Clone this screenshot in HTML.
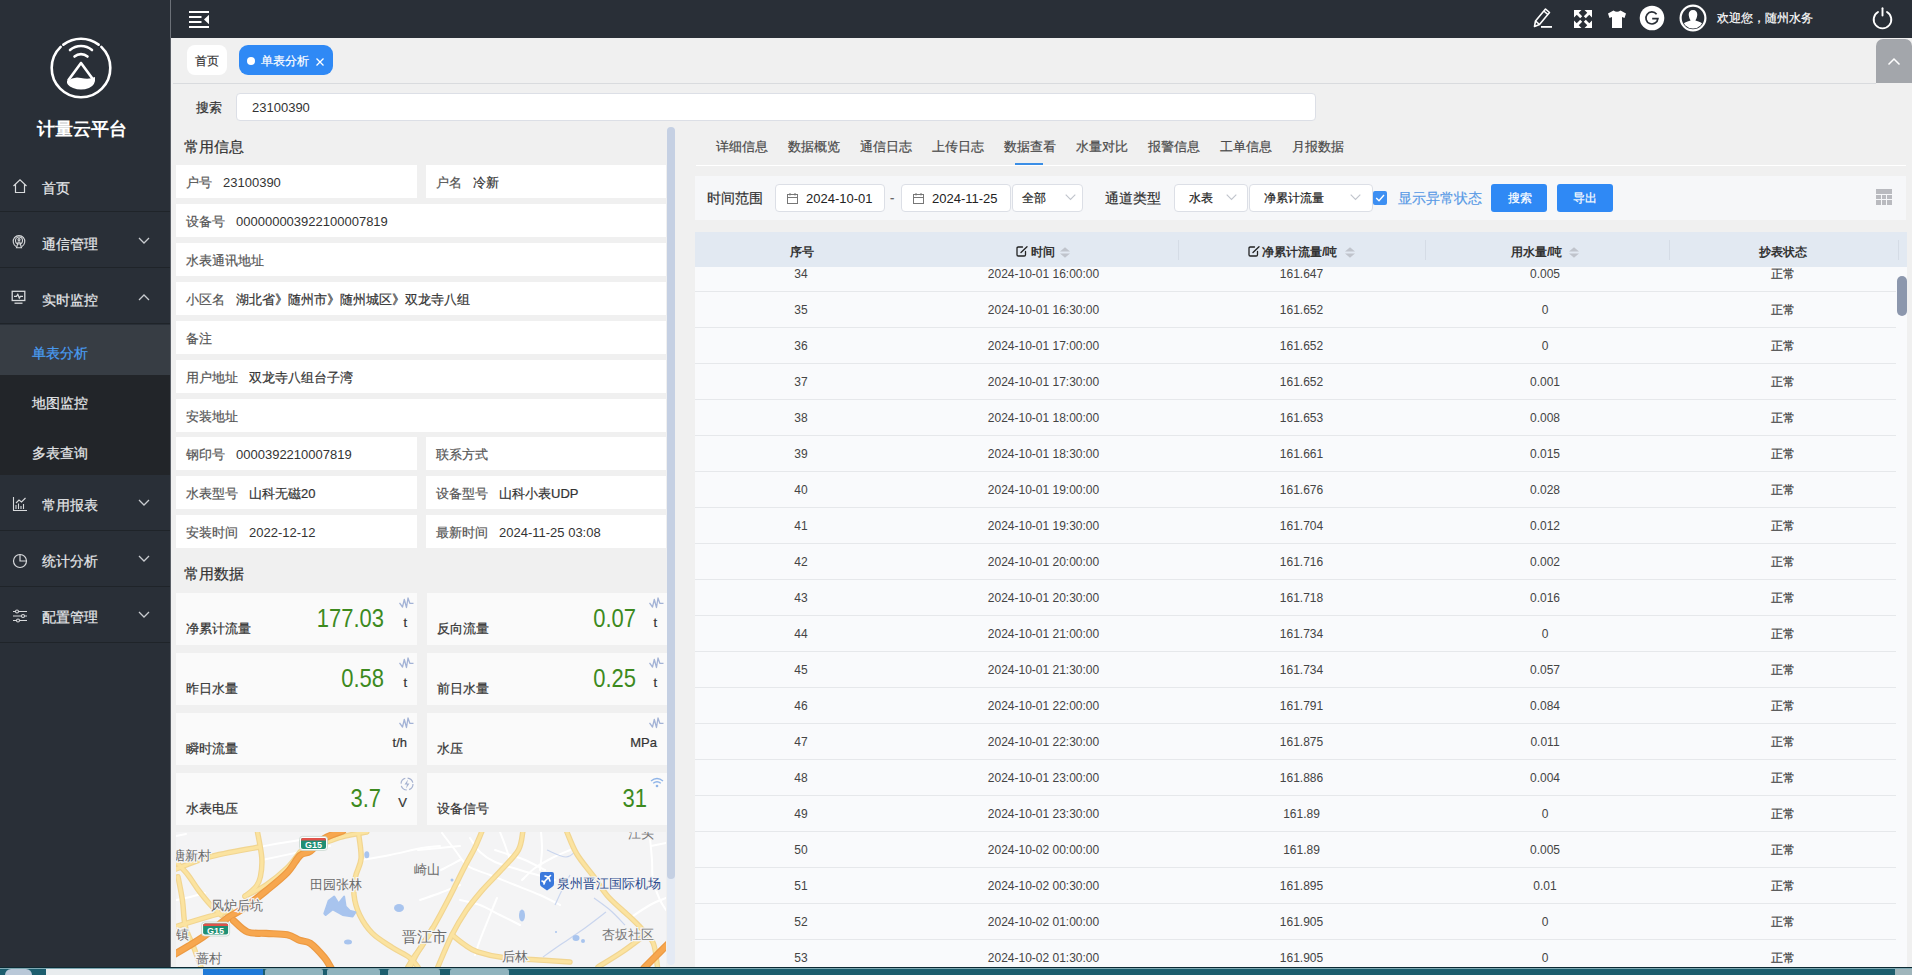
<!DOCTYPE html>
<html><head><meta charset="utf-8"><title>单表分析</title>
<style>
*{box-sizing:border-box;margin:0;padding:0}
html,body{width:1912px;height:975px;overflow:hidden}
body{-webkit-text-stroke:0.2px currentColor;position:relative;background:#f0f0f0;font-family:"Liberation Sans",sans-serif;color:#333;font-size:13px}
.a{position:absolute;white-space:nowrap}
svg{display:block}
.sb{position:absolute;left:0;top:0;width:170px;height:975px;background:#292f37}
.mi{position:absolute;left:0;width:170px;height:56px;border-bottom:1px solid #1f2429}
.mt{position:absolute;left:42px;font-size:14px;line-height:14px;color:#e6e8ea}
.mic{position:absolute;left:12px}
.chev{position:absolute;left:138px}
.smi{position:absolute;left:0;width:170px;height:50px;background:#222529}
.smt{position:absolute;left:32px;font-size:14px;line-height:14px;color:#e6e8ea}
.hdr{position:absolute;left:171px;top:0;width:1741px;height:38px;background:#292f37}
.cell{position:absolute;height:33px;background:#fff}
.cl{position:absolute;left:10px;top:11px;font-size:13px;line-height:13px;color:#555}
.cv{position:absolute;top:11px;font-size:13px;line-height:13px;color:#333}
.card{position:absolute;width:241px;height:52px;background:#fafafa}
.cdl{position:absolute;left:10px;top:29px;font-size:13px;line-height:13px;color:#333}
.cdv{-webkit-text-stroke:0;position:absolute;font-size:22px;line-height:22px;color:#3d8a1e;top:17px;transform:scaleY(1.13);transform-origin:50% 100%}
.cdu{position:absolute;font-size:13px;line-height:13px;color:#333;top:23px}
.tab{position:absolute;top:140px;font-size:13px;line-height:13px;color:#4a4a4a}
.ns{-webkit-text-stroke:0}
.inp{position:absolute;background:#fff;border:1px solid #dcdfe6;border-radius:4px}
.th{position:absolute;top:246px;font-size:12px;line-height:12px;font-weight:bold;color:#333;-webkit-text-stroke:0}
.td{position:absolute;font-size:12px;line-height:12px;color:#444;text-align:center;-webkit-text-stroke:0}
.zc{-webkit-text-stroke:0.2px currentColor}
.rl{position:absolute;left:695px;width:1201px;height:1px;background:#e6e8eb}
</style></head><body>

<div class="sb"></div>
<div class="a" style="left:170px;top:0;width:1px;height:38px;background:#6c7178"></div>
<div class="a" style="left:170px;top:38px;width:1px;height:930px;background:#5a5f66"></div>
<svg class="a" style="left:46px;top:33px" width="70" height="70" viewBox="0 0 70 70">
<g fill="none" stroke="#fff" stroke-width="2.6" stroke-linecap="round">
<path d="M 14.65 13.92 A 29.3 29.3 0 1 0 55.35 13.92"/>
<path d="M 17.37 11.6 A 29.3 29.3 0 0 1 52.63 11.6"/>
<path d="M 24 17 A 17 17 0 0 1 46 17"/>
<path d="M 28.5 23.5 A 10 10 0 0 1 41.5 23.5"/>
<path d="M 35 30 L 22.5 47 M 35 30 L 47.5 47"/>
</g>
<path d="M 21 48 Q 28 43 35 45 Q 43 47 49 44 Q 50 52 43 55 Q 35 58 27 55 Q 20 52 21 48 Z" fill="#fff"/>
</svg>
<div class="a" style="left:37px;top:120px;font-size:18px;line-height:18px;font-weight:bold;color:#fff;-webkit-text-stroke:0">计量云平台</div>
<div class="mi" style="top:156px">
<div class="mic" style="top:22px;left:12px"><svg width="16" height="16" viewBox="0 0 16 16"><path d="M1.5 8 L8 1.8 L14.5 8 M3.5 6.3 V14.5 H12.5 V6.3" fill="none" stroke="#d8dadc" stroke-width="1.2"/></svg></div>
<div class="mt" style="top:25px">首页</div>
</div>
<div class="mi" style="top:212px">
<div class="mic" style="top:22px;left:11px"><svg width="16" height="16" viewBox="0 0 16 16"><g fill="none" stroke="#d8dadc" stroke-width="1.1"><path d="M5.2 12.5 A5.8 5.8 0 1 1 10.8 12.5"/><circle cx="8" cy="6.5" r="3.5"/><circle cx="8" cy="5.5" r="1"/><path d="M5.5 13.8 H10.5 L8.8 8 H7.2 Z"/></g></svg></div>
<div class="mt" style="top:25px">通信管理</div>
<div class="chev" style="top:25px"><svg width="12" height="7" viewBox="0 0 12 7"><path d="M1 1 L6 6 L11 1" fill="none" stroke="#c9ccd0" stroke-width="1.3"/></svg></div>
</div>
<div class="mi" style="top:268px">
<div class="mic" style="top:22px;left:11px"><svg width="16" height="16" viewBox="0 0 16 16"><g fill="none" stroke="#d8dadc" stroke-width="1.3"><rect x="1.2" y="1.3" width="12.6" height="9.2"/><path d="M3 6.3 H5.5 L6.8 4.3 L8.3 8 L9.4 6.3 H12"/><path d="M3.5 13.2 H11.5"/></g></svg></div>
<div class="mt" style="top:25px">实时监控</div>
<div class="chev" style="top:26px"><svg width="12" height="7" viewBox="0 0 12 7"><path d="M1 6 L6 1 L11 6" fill="none" stroke="#c9ccd0" stroke-width="1.3"/></svg></div>
</div>
<div class="smi" style="top:325px;background:#373d44"><div class="smt" style="top:21px;color:#4a9ff5">单表分析</div></div>
<div class="smi" style="top:375px"><div class="smt" style="top:21px">地图监控</div></div>
<div class="smi" style="top:425px"><div class="smt" style="top:21px">多表查询</div></div>
<div class="mi" style="top:475px">
<div class="mic" style="top:21px"><svg width="16" height="16" viewBox="0 0 16 16"><g fill="none" stroke="#d8dadc" stroke-width="1.1"><path d="M1.5 1 V14.5 H15"/><path d="M4 13 V9 M6.5 13 V7.5 M9 13 V10 M11.5 13 V8 M4 7 L7 4 L9.5 6 L13.5 2"/></g></svg></div>
<div class="mt" style="top:23px">常用报表</div>
<div class="chev" style="top:24px"><svg width="12" height="7" viewBox="0 0 12 7"><path d="M1 1 L6 6 L11 1" fill="none" stroke="#c9ccd0" stroke-width="1.3"/></svg></div>
</div>
<div class="mi" style="top:531px">
<div class="mic" style="top:22px"><svg width="16" height="16" viewBox="0 0 16 16"><g fill="none" stroke="#d8dadc" stroke-width="1.2"><circle cx="8" cy="8" r="6.5"/><path d="M8 1.5 V8 H14.5"/></g></svg></div>
<div class="mt" style="top:23px">统计分析</div>
<div class="chev" style="top:24px"><svg width="12" height="7" viewBox="0 0 12 7"><path d="M1 1 L6 6 L11 1" fill="none" stroke="#c9ccd0" stroke-width="1.3"/></svg></div>
</div>
<div class="mi" style="top:587px">
<div class="mic" style="top:21px"><svg width="16" height="16" viewBox="0 0 16 16"><g fill="none" stroke="#d8dadc" stroke-width="1.1"><path d="M1 3.5 H15 M1 8 H15 M1 12.5 H15"/><circle cx="5" cy="3.5" r="1.5" fill="#292f37"/><circle cx="11" cy="8" r="1.5" fill="#292f37"/><circle cx="6" cy="12.5" r="1.5" fill="#292f37"/></g></svg></div>
<div class="mt" style="top:23px">配置管理</div>
<div class="chev" style="top:24px"><svg width="12" height="7" viewBox="0 0 12 7"><path d="M1 1 L6 6 L11 1" fill="none" stroke="#c9ccd0" stroke-width="1.3"/></svg></div>
</div>
<div class="hdr"></div>
<svg class="a" style="left:189px;top:11px" width="20" height="17" viewBox="0 0 20 17">
<g fill="#fff"><rect x="0" y="0" width="20" height="2"/><rect x="0" y="5" width="12.5" height="2"/><rect x="0" y="10" width="12.5" height="2"/><rect x="0" y="15" width="20" height="2"/><path d="M20 3.8 L15 8.5 L20 13.2 Z"/></g></svg>
<svg class="a" style="left:1532px;top:7px" width="22" height="22" viewBox="0 0 22 22">
<g fill="none" stroke="#fff" stroke-width="1.6" stroke-linejoin="round"><path d="M2.5 19.5 L3.5 14 L13.5 2 L17.5 5.5 L7.5 17.5 Z"/><path d="M11.8 4 L15.8 7.5"/><path d="M3.5 14 L7.5 17.5"/></g>
<rect x="9" y="19" width="11" height="1.8" fill="#fff"/></svg>
<svg class="a" style="left:1574px;top:10px" width="18" height="18" viewBox="0 0 18 18">
<path d="M0 0 H7.5 L0 7.5 Z M18 0 V7.5 L10.5 0 Z M0 18 V10.5 L7.5 18 Z M18 18 H10.5 L18 10.5 Z" fill="#fff"/>
<path d="M2 2 L7.2 7.2 M16 2 L10.8 7.2 M2 16 L7.2 10.8 M16 16 L10.8 10.8" stroke="#fff" stroke-width="2.8"/></svg>
<svg class="a" style="left:1607px;top:9px" width="20" height="20" viewBox="0 0 20 20">
<path d="M6.5 1.5 Q10 4 13.5 1.5 L19 4.5 L17.5 9 L15 8 V19 H5 V8 L2.5 9 L1 4.5 Z" fill="#fff"/></svg>
<svg class="a" style="left:1639px;top:5px" width="26" height="26" viewBox="0 0 26 26">
<circle cx="13" cy="13" r="12.3" fill="#fff"/>
<path d="M17.6 9.2 A6 6 0 1 0 18.9 13.6 H13.2" fill="none" stroke="#292f37" stroke-width="1.7"/></svg>
<svg class="a" style="left:1679px;top:4px" width="28" height="28" viewBox="0 0 28 28">
<defs><clipPath id="uc"><circle cx="14" cy="14" r="10.6"/></clipPath></defs>
<circle cx="14" cy="14" r="12.4" fill="none" stroke="#fff" stroke-width="2.2"/>
<g clip-path="url(#uc)" fill="#fff"><path d="M14 6 C17.4 6 18.6 8.8 18.2 11.6 C17.9 13.9 17.1 15.4 16.4 16.4 C20.8 17.4 24 19 25 22 L25 28 H3 V22 C4 19 7.2 17.4 11.6 16.4 C10.9 15.4 10.1 13.9 9.8 11.6 C9.4 8.8 10.6 6 14 6 Z"/></g></svg>
<div class="a" style="left:1717px;top:12px;font-size:12px;line-height:12px;color:#fff">欢迎您，随州水务</div>
<svg class="a" style="left:1871px;top:7px" width="23" height="23" viewBox="0 0 23 23">
<g fill="none" stroke="#fff" stroke-width="1.9" stroke-linecap="round"><path d="M7 5 A8.8 8.8 0 1 0 16 5"/><path d="M11.5 1.2 V8.5"/></g></svg>
<div class="a" style="left:173px;top:83px;width:1703px;height:1px;background:#d9dbde"></div>
<div class="a" style="left:187px;top:45px;width:40px;height:30px;background:#fff;border-radius:8px"></div>
<div class="a" style="left:195px;top:55px;font-size:12px;line-height:12px;color:#333">首页</div>
<div class="a" style="left:239px;top:45px;width:94px;height:30px;background:#2f89f5;border-radius:9px"></div>
<div class="a" style="left:247px;top:57px;width:8px;height:8px;border-radius:50%;background:#fff"></div>
<div class="a" style="left:261px;top:55px;font-size:12px;line-height:12px;color:#fff">单表分析</div>
<svg class="a" style="left:315px;top:57px" width="10" height="10" viewBox="0 0 10 10"><path d="M1.5 1.5 L8.5 8.5 M8.5 1.5 L1.5 8.5" stroke="#fff" stroke-width="1.3"/></svg>
<div class="a" style="left:1876px;top:39px;width:36px;height:44px;background:#a3a6ab;border-radius:7px 7px 0 0"></div>
<svg class="a" style="left:1887px;top:57px" width="14" height="9" viewBox="0 0 14 9"><path d="M1.5 7.5 L7 2 L12.5 7.5" fill="none" stroke="#fff" stroke-width="1.5"/></svg>
<div class="a" style="left:196px;top:101px;font-size:13px;line-height:13px;color:#333">搜索</div>
<div class="inp" style="left:236px;top:93px;width:1080px;height:28px"></div>
<div class="a ns" style="left:252px;top:101px;font-size:13px;line-height:13px;color:#333">23100390</div>
<div class="a" style="left:184px;top:139px;font-size:15px;line-height:15px;color:#333">常用信息</div>
<div class="cell" style="left:176px;top:165px;width:241px"><span class="cl">户号</span>
<span class="cv ns" style="left:47px">23100390</span>
</div>
<div class="cell" style="left:426px;top:165px;width:240px"><span class="cl">户名</span>
<span class="cv" style="left:47px">冷新</span>
</div>
<div class="cell" style="left:176px;top:204px;width:490px"><span class="cl">设备号</span>
<span class="cv ns" style="left:60px">000000003922100007819</span>
</div>
<div class="cell" style="left:176px;top:243px;width:490px"><span class="cl">水表通讯地址</span>
</div>
<div class="cell" style="left:176px;top:282px;width:490px"><span class="cl">小区名</span>
<span class="cv" style="left:60px">湖北省》随州市》随州城区》双龙寺八组</span>
</div>
<div class="cell" style="left:176px;top:321px;width:490px"><span class="cl">备注</span>
</div>
<div class="cell" style="left:176px;top:360px;width:490px"><span class="cl">用户地址</span>
<span class="cv" style="left:73px">双龙寺八组台子湾</span>
</div>
<div class="cell" style="left:176px;top:399px;width:490px"><span class="cl">安装地址</span>
</div>
<div class="cell" style="left:176px;top:437px;width:241px"><span class="cl">钢印号</span>
<span class="cv ns" style="left:60px">0000392210007819</span>
</div>
<div class="cell" style="left:426px;top:437px;width:240px"><span class="cl">联系方式</span>
</div>
<div class="cell" style="left:176px;top:476px;width:241px"><span class="cl">水表型号</span>
<span class="cv" style="left:73px">山科无磁20</span>
</div>
<div class="cell" style="left:426px;top:476px;width:240px"><span class="cl">设备型号</span>
<span class="cv" style="left:73px">山科小表UDP</span>
</div>
<div class="cell" style="left:176px;top:515px;width:241px"><span class="cl">安装时间</span>
<span class="cv ns" style="left:73px">2022-12-12</span>
</div>
<div class="cell" style="left:426px;top:515px;width:240px"><span class="cl">最新时间</span>
<span class="cv ns" style="left:73px">2024-11-25 03:08</span>
</div>
<div class="a" style="left:184px;top:566px;font-size:15px;line-height:15px;color:#333">常用数据</div>
<div class="card" style="left:176px;top:593px;width:241px">
<span class="cdl">净累计流量</span>
<span class="cdv" style="right:33px">177.03</span>
<span class="cdu" style="right:10px">t</span>
<span class="a" style="right:3px;top:4px"><svg width="15" height="12" viewBox="0 0 15 12"><path d="M0.5 5.8 L3.5 10 L5.3 2.5 L7.5 10.5 L9 1 L10.8 6.3 H14.5" fill="none" stroke="#a3b3d6" stroke-width="1.3" stroke-linejoin="round"/></svg></span>
</div>
<div class="card" style="left:427px;top:593px;width:240px">
<span class="cdl">反向流量</span>
<span class="cdv" style="right:31px">0.07</span>
<span class="cdu" style="right:10px">t</span>
<span class="a" style="right:3px;top:4px"><svg width="15" height="12" viewBox="0 0 15 12"><path d="M0.5 5.8 L3.5 10 L5.3 2.5 L7.5 10.5 L9 1 L10.8 6.3 H14.5" fill="none" stroke="#a3b3d6" stroke-width="1.3" stroke-linejoin="round"/></svg></span>
</div>
<div class="card" style="left:176px;top:653px;width:241px">
<span class="cdl">昨日水量</span>
<span class="cdv" style="right:33px">0.58</span>
<span class="cdu" style="right:10px">t</span>
<span class="a" style="right:3px;top:4px"><svg width="15" height="12" viewBox="0 0 15 12"><path d="M0.5 5.8 L3.5 10 L5.3 2.5 L7.5 10.5 L9 1 L10.8 6.3 H14.5" fill="none" stroke="#a3b3d6" stroke-width="1.3" stroke-linejoin="round"/></svg></span>
</div>
<div class="card" style="left:427px;top:653px;width:240px">
<span class="cdl">前日水量</span>
<span class="cdv" style="right:31px">0.25</span>
<span class="cdu" style="right:10px">t</span>
<span class="a" style="right:3px;top:4px"><svg width="15" height="12" viewBox="0 0 15 12"><path d="M0.5 5.8 L3.5 10 L5.3 2.5 L7.5 10.5 L9 1 L10.8 6.3 H14.5" fill="none" stroke="#a3b3d6" stroke-width="1.3" stroke-linejoin="round"/></svg></span>
</div>
<div class="card" style="left:176px;top:713px;width:241px">
<span class="cdl">瞬时流量</span>
<span class="cdu" style="right:10px">t/h</span>
<span class="a" style="right:3px;top:4px"><svg width="15" height="12" viewBox="0 0 15 12"><path d="M0.5 5.8 L3.5 10 L5.3 2.5 L7.5 10.5 L9 1 L10.8 6.3 H14.5" fill="none" stroke="#a3b3d6" stroke-width="1.3" stroke-linejoin="round"/></svg></span>
</div>
<div class="card" style="left:427px;top:713px;width:240px">
<span class="cdl">水压</span>
<span class="cdu" style="right:10px">MPa</span>
<span class="a" style="right:3px;top:4px"><svg width="15" height="12" viewBox="0 0 15 12"><path d="M0.5 5.8 L3.5 10 L5.3 2.5 L7.5 10.5 L9 1 L10.8 6.3 H14.5" fill="none" stroke="#a3b3d6" stroke-width="1.3" stroke-linejoin="round"/></svg></span>
</div>
<div class="card" style="left:176px;top:773px;width:241px">
<span class="cdl">水表电压</span>
<span class="cdv" style="right:36px">3.7</span>
<span class="cdu" style="right:10px">V</span>
<span class="a" style="right:3px;top:4px"><svg width="14" height="14" viewBox="0 0 14 14"><circle cx="7" cy="7" r="6" fill="none" stroke="#a6b2d0" stroke-width="1.2" stroke-dasharray="7 2.4"/><path d="M8 2.5 L4.5 7.5 H7 L6 11.5 L9.5 6.5 H7 Z" fill="#a6b2d0"/></svg></span>
</div>
<div class="card" style="left:427px;top:773px;width:240px">
<span class="cdl">设备信号</span>
<span class="cdv" style="right:20px">31</span>
<span class="a" style="right:3px;top:4px"><svg width="14" height="11" viewBox="0 0 14 11"><g fill="none" stroke="#8fb4e8" stroke-width="1.4"><path d="M1 4 Q7 -1 13 4"/><path d="M3.2 6.3 Q7 3 10.8 6.3"/></g><circle cx="7" cy="9" r="1.3" fill="#8fb4e8"/></svg></span>
</div>
<div class="a" style="left:667px;top:127px;width:8px;height:838px;background:#e4eaf4;border-radius:4px"></div>
<div class="a" style="left:667px;top:127px;width:8px;height:752px;background:#c5d0e3;border-radius:4px"></div>
<div class="a" style="left:176px;top:832px;width:490px;height:135px;background:#f4f4f2;overflow:hidden"><svg width="490" height="135" viewBox="0 0 490 135" style="display:block">
<rect width="490" height="135" fill="#f4f4f5"/>
<path d="M83.0 15.0 C89.8 13.8 110.5 9.8 124.0 8.0 C137.5 6.2 157.3 4.7 164.0 4.0" fill="none" stroke="#ffffff" stroke-width="2" stroke-linejoin="round" stroke-linecap="round"/>
<path d="M86.0 28.0 C92.3 26.7 112.7 22.3 124.0 20.0 C135.3 17.7 149.0 15.0 154.0 14.0" fill="none" stroke="#ffffff" stroke-width="2" stroke-linejoin="round" stroke-linecap="round"/>
<path d="M0.0 68.0 C2.3 67.5 9.2 66.2 14.0 65.0 C18.8 63.8 26.5 61.7 29.0 61.0" fill="none" stroke="#ffffff" stroke-width="2" stroke-linejoin="round" stroke-linecap="round"/>
<path d="M186.0 28.0 C190.7 27.2 204.0 25.0 214.0 23.0 C224.0 21.0 237.7 17.5 246.0 16.0 C254.3 14.5 261.0 14.3 264.0 14.0" fill="none" stroke="#ffffff" stroke-width="2" stroke-linejoin="round" stroke-linecap="round"/>
<path d="M242.0 18.0 C245.7 17.7 257.0 16.7 264.0 16.0 C271.0 15.3 280.7 14.3 284.0 14.0" fill="none" stroke="#ffffff" stroke-width="2" stroke-linejoin="round" stroke-linecap="round"/>
<path d="M266.0 1.0 C268.2 3.8 274.7 12.5 279.0 18.0 C283.3 23.5 286.2 29.8 292.0 34.0 C297.8 38.2 306.2 39.8 314.0 43.0 C321.8 46.2 330.7 49.7 339.0 53.0 C347.3 56.3 356.5 59.7 364.0 63.0 C371.5 66.3 380.7 71.3 384.0 73.0" fill="none" stroke="#ffffff" stroke-width="2" stroke-linejoin="round" stroke-linecap="round"/>
<path d="M294.0 6.0 C295.7 8.3 299.8 16.0 304.0 20.0 C308.2 24.0 312.3 27.0 319.0 30.0 C325.7 33.0 334.0 35.0 344.0 38.0 C354.0 41.0 373.2 46.3 379.0 48.0" fill="none" stroke="#ffffff" stroke-width="2" stroke-linejoin="round" stroke-linecap="round"/>
<path d="M254.0 43.0 C256.5 41.8 264.0 38.5 269.0 36.0 C274.0 33.5 281.5 29.3 284.0 28.0" fill="none" stroke="#ffffff" stroke-width="2" stroke-linejoin="round" stroke-linecap="round"/>
<path d="M244.0 68.0 C247.3 66.8 257.3 63.5 264.0 61.0 C270.7 58.5 280.7 54.3 284.0 53.0" fill="none" stroke="#ffffff" stroke-width="2" stroke-linejoin="round" stroke-linecap="round"/>
<path d="M284.0 68.0 C287.3 68.8 297.3 70.5 304.0 73.0 C310.7 75.5 317.3 79.7 324.0 83.0 C330.7 86.3 340.7 91.3 344.0 93.0" fill="none" stroke="#ffffff" stroke-width="2" stroke-linejoin="round" stroke-linecap="round"/>
<path d="M321.0 66.0 C319.8 68.8 316.8 76.0 314.0 83.0 C311.2 90.0 306.5 101.3 304.0 108.0 C301.5 114.7 299.8 120.5 299.0 123.0" fill="none" stroke="#ffffff" stroke-width="2" stroke-linejoin="round" stroke-linecap="round"/>
<path d="M319.0 18.0 C321.5 18.8 329.0 21.3 334.0 23.0 C339.0 24.7 343.2 25.5 349.0 28.0 C354.8 30.5 365.7 36.3 369.0 38.0" fill="none" stroke="#ffffff" stroke-width="2" stroke-linejoin="round" stroke-linecap="round"/>
<path d="M346.0 48.0 C348.2 46.0 354.0 39.7 359.0 36.0 C364.0 32.3 370.2 29.0 376.0 26.0 C381.8 23.0 391.0 19.3 394.0 18.0" fill="none" stroke="#ffffff" stroke-width="2" stroke-linejoin="round" stroke-linecap="round"/>
<path d="M474.0 6.0 C474.3 9.7 475.5 21.0 476.0 28.0 C476.5 35.0 475.7 41.3 477.0 48.0 C478.3 54.7 481.8 63.0 484.0 68.0 C486.2 73.0 489.0 76.3 490.0 78.0" fill="none" stroke="#ffffff" stroke-width="2" stroke-linejoin="round" stroke-linecap="round"/>
<path d="M475.0 14.0 L490.0 11.0" fill="none" stroke="#ffffff" stroke-width="2" stroke-linejoin="round" stroke-linecap="round"/>
<path d="M454.0 86.0 C457.3 83.8 468.0 76.3 474.0 73.0 C480.0 69.7 487.3 67.2 490.0 66.0" fill="none" stroke="#ffffff" stroke-width="2" stroke-linejoin="round" stroke-linecap="round"/>
<path d="M365.0 0.0 C365.2 3.0 366.2 11.7 366.0 18.0 C365.8 24.3 364.3 34.7 364.0 38.0" fill="none" stroke="#ffffff" stroke-width="2" stroke-linejoin="round" stroke-linecap="round"/>
<path d="M324.0 0.0 C324.8 2.2 327.3 8.3 329.0 13.0 C330.7 17.7 333.2 25.5 334.0 28.0" fill="none" stroke="#ffffff" stroke-width="2" stroke-linejoin="round" stroke-linecap="round"/>
<path d="M0.0 4.0 L10.0 2.0" fill="none" stroke="#ffffff" stroke-width="2" stroke-linejoin="round" stroke-linecap="round"/>
<path d="M367.0 125.0 C369.8 123.0 377.0 117.8 384.0 113.0 C391.0 108.2 401.3 101.5 409.0 96.0 C416.7 90.5 426.5 82.7 430.0 80.0" fill="none" stroke="#c9d5ee" stroke-width="1.2"/>
<path d="M418.0 66.0 C420.7 68.0 428.8 73.5 434.0 78.0 C439.2 82.5 446.5 90.5 449.0 93.0" fill="none" stroke="#c9d5ee" stroke-width="1.2"/>
<path d="M371.0 18.0 C374.2 19.2 385.0 25.0 390.0 25.0 C395.0 25.0 399.2 19.2 401.0 18.0" fill="none" stroke="#c9d5ee" stroke-width="1.2"/>
<path d="M394.0 43.0 C392.7 45.5 388.5 53.0 386.0 58.0 C383.5 63.0 380.2 70.5 379.0 73.0" fill="none" stroke="#c9d5ee" stroke-width="1.2"/>
<path d="M0.0 37.0 C5.5 35.0 19.2 28.7 33.0 25.0 C46.8 21.3 74.7 16.7 83.0 15.0" fill="none" stroke="#f1d591" stroke-width="5.5" stroke-linejoin="round" stroke-linecap="round"/>
<path d="M81.5 0.0 C82.2 4.3 85.3 18.5 85.8 26.0 C86.3 33.5 85.4 39.9 84.4 44.7 C83.4 49.5 82.6 51.3 80.0 54.6 C77.4 57.9 70.8 62.9 69.0 64.5" fill="none" stroke="#f1d591" stroke-width="5.5" stroke-linejoin="round" stroke-linecap="round"/>
<path d="M0.8 30.6 C2.7 32.7 8.5 38.5 12.0 43.0 C15.5 47.5 18.4 52.7 22.0 57.5 C25.6 62.3 29.6 67.4 33.4 71.6 C37.2 75.9 43.1 81.1 45.0 83.0" fill="none" stroke="#f1d591" stroke-width="5.5" stroke-linejoin="round" stroke-linecap="round"/>
<path d="M2.0 44.7 C2.8 48.7 5.3 60.5 6.5 68.8 C7.7 77.1 7.4 86.5 9.3 94.3 C11.2 102.1 15.2 108.7 17.8 115.5 C20.4 122.3 23.8 131.8 25.0 135.0" fill="none" stroke="#f1d591" stroke-width="5.5" stroke-linejoin="round" stroke-linecap="round"/>
<path d="M0.8 94.3 C6.2 92.6 24.4 87.0 33.4 84.4 C42.4 81.8 51.4 79.7 55.0 78.7" fill="none" stroke="#f1d591" stroke-width="5.5" stroke-linejoin="round" stroke-linecap="round"/>
<path d="M69.0 64.0 C72.5 62.2 83.0 57.7 90.0 53.0 C97.0 48.3 105.3 41.5 111.0 36.0 C116.7 30.5 121.8 22.7 124.0 20.0" fill="none" stroke="#f1d591" stroke-width="5.5" stroke-linejoin="round" stroke-linecap="round"/>
<path d="M152.6 9.3 C155.3 8.4 162.6 5.5 169.0 4.0 C175.4 2.5 187.2 0.7 190.8 0.0" fill="none" stroke="#f1d591" stroke-width="5.5" stroke-linejoin="round" stroke-linecap="round"/>
<path d="M182.3 0.0 C182.8 4.4 185.6 18.8 185.1 26.3 C184.6 33.7 180.7 38.6 179.5 44.7 C178.3 50.8 177.3 56.6 178.0 63.0 C178.7 69.4 180.6 76.6 183.7 83.0 C186.8 89.4 191.1 96.0 196.5 101.4 C201.9 106.8 210.2 111.5 216.3 115.5 C222.4 119.5 229.0 122.1 233.3 125.4 C237.6 128.6 240.6 133.4 242.0 135.0" fill="none" stroke="#f1d591" stroke-width="5.5" stroke-linejoin="round" stroke-linecap="round"/>
<path d="M231.9 135.0 C232.9 133.3 235.7 128.5 238.0 125.0 C240.3 121.5 243.0 118.7 246.0 114.0 C249.0 109.3 254.3 99.8 256.0 97.0" fill="none" stroke="#f1d591" stroke-width="5.5" stroke-linejoin="round" stroke-linecap="round"/>
<path d="M305.7 0.0 C304.5 2.7 301.4 10.6 298.6 16.4 C295.8 22.2 292.9 26.5 288.7 34.8 C284.4 43.1 278.5 55.6 273.1 66.0 C267.7 76.4 261.4 88.1 256.2 97.1 C251.0 106.1 245.7 113.5 242.0 119.8 C238.3 126.1 235.3 132.5 234.0 135.0" fill="none" stroke="#f1d591" stroke-width="5.5" stroke-linejoin="round" stroke-linecap="round"/>
<path d="M346.8 0.0 C346.1 3.0 345.8 11.8 342.5 17.8 C339.2 23.8 333.1 29.4 327.0 36.2 C320.9 43.1 311.8 51.8 305.7 58.9 C299.6 66.0 295.1 71.4 290.1 78.7 C285.2 86.0 280.7 93.4 276.0 102.8 C271.3 112.2 264.2 129.6 261.8 135.0" fill="none" stroke="#f1d591" stroke-width="5.5" stroke-linejoin="round" stroke-linecap="round"/>
<path d="M276.0 102.8 C278.1 104.4 284.4 109.9 288.7 112.7 C292.9 115.5 295.1 117.7 301.5 119.8 C307.9 121.9 315.9 124.0 327.0 125.4 C338.1 126.8 356.8 127.5 368.0 128.3 C379.2 129.1 389.7 129.7 394.0 130.0" fill="none" stroke="#f1d591" stroke-width="5.5" stroke-linejoin="round" stroke-linecap="round"/>
<path d="M390.9 0.0 C392.5 3.7 396.3 14.5 400.8 22.0 C405.3 29.5 412.6 37.6 417.8 44.7 C423.0 51.8 426.3 58.1 432.0 64.5 C437.7 70.9 446.1 77.6 451.8 83.0 C457.5 88.4 461.8 92.4 466.0 97.1 C470.2 101.8 474.7 105.0 477.3 111.3 C479.9 117.6 480.8 131.0 481.5 135.0" fill="none" stroke="#f1d591" stroke-width="5.5" stroke-linejoin="round" stroke-linecap="round"/>
<path d="M422.0 135.0 C426.0 132.5 438.2 125.3 446.0 120.0 C453.8 114.7 465.2 105.8 469.0 103.0" fill="none" stroke="#f1d591" stroke-width="5.5" stroke-linejoin="round" stroke-linecap="round"/>
<path d="M0.0 37.0 C5.5 35.0 19.2 28.7 33.0 25.0 C46.8 21.3 74.7 16.7 83.0 15.0" fill="none" stroke="#fbe3a0" stroke-width="3.2" stroke-linejoin="round" stroke-linecap="round"/>
<path d="M81.5 0.0 C82.2 4.3 85.3 18.5 85.8 26.0 C86.3 33.5 85.4 39.9 84.4 44.7 C83.4 49.5 82.6 51.3 80.0 54.6 C77.4 57.9 70.8 62.9 69.0 64.5" fill="none" stroke="#fbe3a0" stroke-width="3.2" stroke-linejoin="round" stroke-linecap="round"/>
<path d="M0.8 30.6 C2.7 32.7 8.5 38.5 12.0 43.0 C15.5 47.5 18.4 52.7 22.0 57.5 C25.6 62.3 29.6 67.4 33.4 71.6 C37.2 75.9 43.1 81.1 45.0 83.0" fill="none" stroke="#fbe3a0" stroke-width="3.2" stroke-linejoin="round" stroke-linecap="round"/>
<path d="M2.0 44.7 C2.8 48.7 5.3 60.5 6.5 68.8 C7.7 77.1 7.4 86.5 9.3 94.3 C11.2 102.1 15.2 108.7 17.8 115.5 C20.4 122.3 23.8 131.8 25.0 135.0" fill="none" stroke="#fbe3a0" stroke-width="3.2" stroke-linejoin="round" stroke-linecap="round"/>
<path d="M0.8 94.3 C6.2 92.6 24.4 87.0 33.4 84.4 C42.4 81.8 51.4 79.7 55.0 78.7" fill="none" stroke="#fbe3a0" stroke-width="3.2" stroke-linejoin="round" stroke-linecap="round"/>
<path d="M69.0 64.0 C72.5 62.2 83.0 57.7 90.0 53.0 C97.0 48.3 105.3 41.5 111.0 36.0 C116.7 30.5 121.8 22.7 124.0 20.0" fill="none" stroke="#fbe3a0" stroke-width="3.2" stroke-linejoin="round" stroke-linecap="round"/>
<path d="M152.6 9.3 C155.3 8.4 162.6 5.5 169.0 4.0 C175.4 2.5 187.2 0.7 190.8 0.0" fill="none" stroke="#fbe3a0" stroke-width="3.2" stroke-linejoin="round" stroke-linecap="round"/>
<path d="M182.3 0.0 C182.8 4.4 185.6 18.8 185.1 26.3 C184.6 33.7 180.7 38.6 179.5 44.7 C178.3 50.8 177.3 56.6 178.0 63.0 C178.7 69.4 180.6 76.6 183.7 83.0 C186.8 89.4 191.1 96.0 196.5 101.4 C201.9 106.8 210.2 111.5 216.3 115.5 C222.4 119.5 229.0 122.1 233.3 125.4 C237.6 128.6 240.6 133.4 242.0 135.0" fill="none" stroke="#fbe3a0" stroke-width="3.2" stroke-linejoin="round" stroke-linecap="round"/>
<path d="M231.9 135.0 C232.9 133.3 235.7 128.5 238.0 125.0 C240.3 121.5 243.0 118.7 246.0 114.0 C249.0 109.3 254.3 99.8 256.0 97.0" fill="none" stroke="#fbe3a0" stroke-width="3.2" stroke-linejoin="round" stroke-linecap="round"/>
<path d="M305.7 0.0 C304.5 2.7 301.4 10.6 298.6 16.4 C295.8 22.2 292.9 26.5 288.7 34.8 C284.4 43.1 278.5 55.6 273.1 66.0 C267.7 76.4 261.4 88.1 256.2 97.1 C251.0 106.1 245.7 113.5 242.0 119.8 C238.3 126.1 235.3 132.5 234.0 135.0" fill="none" stroke="#fbe3a0" stroke-width="3.2" stroke-linejoin="round" stroke-linecap="round"/>
<path d="M346.8 0.0 C346.1 3.0 345.8 11.8 342.5 17.8 C339.2 23.8 333.1 29.4 327.0 36.2 C320.9 43.1 311.8 51.8 305.7 58.9 C299.6 66.0 295.1 71.4 290.1 78.7 C285.2 86.0 280.7 93.4 276.0 102.8 C271.3 112.2 264.2 129.6 261.8 135.0" fill="none" stroke="#fbe3a0" stroke-width="3.2" stroke-linejoin="round" stroke-linecap="round"/>
<path d="M276.0 102.8 C278.1 104.4 284.4 109.9 288.7 112.7 C292.9 115.5 295.1 117.7 301.5 119.8 C307.9 121.9 315.9 124.0 327.0 125.4 C338.1 126.8 356.8 127.5 368.0 128.3 C379.2 129.1 389.7 129.7 394.0 130.0" fill="none" stroke="#fbe3a0" stroke-width="3.2" stroke-linejoin="round" stroke-linecap="round"/>
<path d="M390.9 0.0 C392.5 3.7 396.3 14.5 400.8 22.0 C405.3 29.5 412.6 37.6 417.8 44.7 C423.0 51.8 426.3 58.1 432.0 64.5 C437.7 70.9 446.1 77.6 451.8 83.0 C457.5 88.4 461.8 92.4 466.0 97.1 C470.2 101.8 474.7 105.0 477.3 111.3 C479.9 117.6 480.8 131.0 481.5 135.0" fill="none" stroke="#fbe3a0" stroke-width="3.2" stroke-linejoin="round" stroke-linecap="round"/>
<path d="M422.0 135.0 C426.0 132.5 438.2 125.3 446.0 120.0 C453.8 114.7 465.2 105.8 469.0 103.0" fill="none" stroke="#fbe3a0" stroke-width="3.2" stroke-linejoin="round" stroke-linecap="round"/>
<path d="M-6.0 125.0 C-0.6 121.8 16.7 112.1 26.3 105.6 C35.9 99.1 45.2 90.5 51.8 85.8 C58.4 81.1 59.6 81.8 66.0 77.3 C72.4 72.8 82.5 65.0 90.0 58.9 C97.5 52.8 105.6 46.4 111.3 40.5 C117.0 34.6 120.2 27.0 124.0 23.5 C127.8 20.0 130.1 22.0 134.2 19.2 C138.2 16.4 142.9 9.9 148.3 6.5 C153.7 3.1 163.6 0.2 166.7 -1.0" fill="none" stroke="#ec9a43" stroke-width="7.2" stroke-linejoin="round" stroke-linecap="round"/>
<path d="M57.5 88.6 C59.9 90.5 66.2 97.9 71.6 100.0 C77.0 102.1 83.4 100.9 90.0 101.4 C96.6 101.9 105.6 101.6 111.3 102.8 C117.0 104.0 120.2 107.0 124.0 108.4 C127.8 109.8 130.1 108.5 134.2 111.3 C138.2 114.1 144.8 121.3 148.3 125.4 C151.8 129.5 153.9 134.2 155.0 136.0" fill="none" stroke="#ec9a43" stroke-width="7.2" stroke-linejoin="round" stroke-linecap="round"/>
<path d="M468.0 136.0 C469.8 134.2 475.0 129.0 479.0 125.0 C483.0 121.0 489.8 114.2 492.0 112.0" fill="none" stroke="#ec9a43" stroke-width="7.2" stroke-linejoin="round" stroke-linecap="round"/>
<path d="M-6.0 125.0 C-0.6 121.8 16.7 112.1 26.3 105.6 C35.9 99.1 45.2 90.5 51.8 85.8 C58.4 81.1 59.6 81.8 66.0 77.3 C72.4 72.8 82.5 65.0 90.0 58.9 C97.5 52.8 105.6 46.4 111.3 40.5 C117.0 34.6 120.2 27.0 124.0 23.5 C127.8 20.0 130.1 22.0 134.2 19.2 C138.2 16.4 142.9 9.9 148.3 6.5 C153.7 3.1 163.6 0.2 166.7 -1.0" fill="none" stroke="#f7a74f" stroke-width="4.8" stroke-linejoin="round" stroke-linecap="round"/>
<path d="M57.5 88.6 C59.9 90.5 66.2 97.9 71.6 100.0 C77.0 102.1 83.4 100.9 90.0 101.4 C96.6 101.9 105.6 101.6 111.3 102.8 C117.0 104.0 120.2 107.0 124.0 108.4 C127.8 109.8 130.1 108.5 134.2 111.3 C138.2 114.1 144.8 121.3 148.3 125.4 C151.8 129.5 153.9 134.2 155.0 136.0" fill="none" stroke="#f7a74f" stroke-width="4.8" stroke-linejoin="round" stroke-linecap="round"/>
<path d="M468.0 136.0 C469.8 134.2 475.0 129.0 479.0 125.0 C483.0 121.0 489.8 114.2 492.0 112.0" fill="none" stroke="#f7a74f" stroke-width="4.8" stroke-linejoin="round" stroke-linecap="round"/>
<path d="M148.3 81.5 L152.6 68.8 L158.2 64.5 L162.5 71.6 L168.1 64.5 L169.6 74.5 L173.8 78.7 L179.5 80.1 L176.6 84.4 L166.7 83.0 L156.8 77.3 L149.7 83.0 Z" fill="#a8c4ee" stroke="#a8c4ee" stroke-width="2" stroke-linejoin="round"/>
<ellipse cx="346" cy="83.5" rx="3" ry="6" fill="#a8c4ee"/>
<ellipse cx="400" cy="106" rx="3.5" ry="3" fill="#a8c4ee"/>
<ellipse cx="407" cy="109" rx="2" ry="2" fill="#a8c4ee"/>
<ellipse cx="223" cy="76" rx="5" ry="4" fill="#a8c4ee"/>
<ellipse cx="172" cy="110" rx="4" ry="2.5" fill="#a8c4ee"/>
<ellipse cx="190.8" cy="22.799999999999955" rx="2.5" ry="3.5" fill="#a8c4ee"/>
<ellipse cx="380" cy="100" rx="1" ry="1" fill="#a8c4ee"/>
<ellipse cx="276" cy="48" rx="1.5" ry="1.5" fill="#a8c4ee"/>
<g transform="translate(123.5,4.399999999999977)"><rect x="0" y="0" width="28" height="14" rx="3" fill="#fff" stroke="#c4d3cc" stroke-width="0.8"/><rect x="1.5" y="1.5" width="25" height="11" rx="2" fill="#1f8f74"/><path d="M1.5 4 V3.5 Q1.5 1.5 3.5 1.5 H24.5 Q26.5 1.5 26.5 3.5 V4 Z" fill="#e0524a"/><text x="14" y="11.8" font-family="Liberation Sans" font-size="9" font-weight="bold" fill="#fff" text-anchor="middle">G15</text></g>
<g transform="translate(25.599999999999994,90)"><rect x="0" y="0" width="28" height="14" rx="3" fill="#fff" stroke="#c4d3cc" stroke-width="0.8"/><rect x="1.5" y="1.5" width="25" height="11" rx="2" fill="#1f8f74"/><path d="M1.5 4 V3.5 Q1.5 1.5 3.5 1.5 H24.5 Q26.5 1.5 26.5 3.5 V4 Z" fill="#e0524a"/><text x="14" y="11.8" font-family="Liberation Sans" font-size="9" font-weight="bold" fill="#fff" text-anchor="middle">G15</text></g>
<g transform="translate(364,40)"><path d="M2 0 H12 Q14 0 14 2 V12 Q14 14 12 15 L7 18.5 L2 15 Q0 14 0 12 V2 Q0 0 2 0 Z" fill="#3a78dc"/><path d="M3.5 10.5 L10.5 3.5 M5 4 L9 5.5 M8.5 5 L10 9 M5 9.5 L4 12 M4.5 10 L2 9" stroke="#fff" stroke-width="1.6" stroke-linecap="round"/></g>
<text x="-4" y="28" font-family="Liberation Sans" font-size="13" fill="#6a6a6a" stroke="#f4f4f5" stroke-width="2.5" paint-order="stroke" style="-webkit-text-stroke:0">塘新村</text>
<text x="134" y="56.5" font-family="Liberation Sans" font-size="12.5" fill="#6a6a6a" stroke="#f4f4f5" stroke-width="2.5" paint-order="stroke" style="-webkit-text-stroke:0">田园张林</text>
<text x="35" y="77.5" font-family="Liberation Sans" font-size="12.5" fill="#6a6a6a" stroke="#f4f4f5" stroke-width="2.5" paint-order="stroke" style="-webkit-text-stroke:0">风炉后坑</text>
<text x="0" y="106.5" font-family="Liberation Sans" font-size="13" fill="#6a6a6a" stroke="#f4f4f5" stroke-width="2.5" paint-order="stroke" style="-webkit-text-stroke:0">镇</text>
<text x="20" y="130.5" font-family="Liberation Sans" font-size="12.5" fill="#6a6a6a" stroke="#f4f4f5" stroke-width="2.5" paint-order="stroke" style="-webkit-text-stroke:0">蔷村</text>
<text x="238" y="42" font-family="Liberation Sans" font-size="12.5" fill="#6a6a6a" stroke="#f4f4f5" stroke-width="2.5" paint-order="stroke" style="-webkit-text-stroke:0">崎山</text>
<text x="226" y="110" font-family="Liberation Sans" font-size="14.5" fill="#6a6a6a" stroke="#f4f4f5" stroke-width="2.5" paint-order="stroke" style="-webkit-text-stroke:0">晋江市</text>
<text x="326" y="128.5" font-family="Liberation Sans" font-size="12.5" fill="#6a6a6a" stroke="#f4f4f5" stroke-width="2.5" paint-order="stroke" style="-webkit-text-stroke:0">后林</text>
<text x="425.5" y="107" font-family="Liberation Sans" font-size="12.5" fill="#777" stroke="#f4f4f5" stroke-width="2.5" paint-order="stroke" style="-webkit-text-stroke:0">杏坂社区</text>
<text x="452" y="5.5" font-family="Liberation Sans" font-size="12.5" fill="#777" stroke="#f4f4f5" stroke-width="2.5" paint-order="stroke" style="-webkit-text-stroke:0">江头</text>
<text x="381" y="56" font-family="Liberation Sans" font-size="13" fill="#2d4c8e" stroke="#f4f4f5" stroke-width="2.5" paint-order="stroke" style="-webkit-text-stroke:0">泉州晋江国际机场</text>
</svg></div>
<div class="tab" style="left:716px">详细信息</div>
<div class="tab" style="left:788px">数据概览</div>
<div class="tab" style="left:860px">通信日志</div>
<div class="tab" style="left:932px">上传日志</div>
<div class="tab" style="left:1004px">数据查看</div>
<div class="tab" style="left:1076px">水量对比</div>
<div class="tab" style="left:1148px">报警信息</div>
<div class="tab" style="left:1220px">工单信息</div>
<div class="tab" style="left:1292px">月报数据</div>
<div class="a" style="left:1015px;top:163px;width:28px;height:2px;background:#3a8ee6"></div>
<div class="a" style="left:696px;top:165px;width:1210px;height:1px;background:#fff"></div>
<div class="a" style="left:695px;top:176px;width:1211px;height:44px;background:#f6f7f9"></div>
<div class="a" style="left:707px;top:191px;font-size:14px;line-height:14px;color:#333">时间范围</div>
<div class="inp" style="left:775px;top:184px;width:110px;height:28px"></div>
<div class="a" style="left:787px;top:193px"><svg width="11" height="11" viewBox="0 0 11 11"><g fill="none" stroke="#777" stroke-width="1"><rect x="0.5" y="1.5" width="10" height="9"/><path d="M0.5 4.5 H10.5 M3 0 V2.5 M8 0 V2.5"/></g></svg></div>
<div class="a ns" style="left:806px;top:192px;font-size:13px;line-height:13px;color:#222">2024-10-01</div>
<div class="a" style="left:890px;top:191px;font-size:13px;line-height:13px;color:#666">-</div>
<div class="inp" style="left:901px;top:184px;width:110px;height:28px"></div>
<div class="a" style="left:913px;top:193px"><svg width="11" height="11" viewBox="0 0 11 11"><g fill="none" stroke="#777" stroke-width="1"><rect x="0.5" y="1.5" width="10" height="9"/><path d="M0.5 4.5 H10.5 M3 0 V2.5 M8 0 V2.5"/></g></svg></div>
<div class="a ns" style="left:932px;top:192px;font-size:13px;line-height:13px;color:#222">2024-11-25</div>
<div class="inp" style="left:1012px;top:184px;width:71px;height:28px"></div>
<div class="a" style="left:1022px;top:192px;font-size:12px;line-height:12px;color:#222">全部</div>
<div class="a" style="left:1065px;top:194px"><svg width="11" height="7" viewBox="0 0 11 7"><path d="M0.7 0.7 L5.5 5.5 L10.3 0.7" fill="none" stroke="#c0c4cc" stroke-width="1.1"/></svg></div>
<div class="a" style="left:1105px;top:191px;font-size:14px;line-height:14px;color:#333">通道类型</div>
<div class="inp" style="left:1174px;top:184px;width:74px;height:28px"></div>
<div class="a" style="left:1189px;top:192px;font-size:12px;line-height:12px;color:#222">水表</div>
<div class="a" style="left:1226px;top:194px"><svg width="11" height="7" viewBox="0 0 11 7"><path d="M0.7 0.7 L5.5 5.5 L10.3 0.7" fill="none" stroke="#c0c4cc" stroke-width="1.1"/></svg></div>
<div class="inp" style="left:1249px;top:184px;width:124px;height:28px"></div>
<div class="a" style="left:1264px;top:192px;font-size:12px;line-height:12px;color:#222">净累计流量</div>
<div class="a" style="left:1350px;top:194px"><svg width="11" height="7" viewBox="0 0 11 7"><path d="M0.7 0.7 L5.5 5.5 L10.3 0.7" fill="none" stroke="#c0c4cc" stroke-width="1.1"/></svg></div>
<div class="a" style="left:1373px;top:191px;width:14px;height:14px;background:#3d8ff2;border-radius:2px"></div>
<svg class="a" style="left:1373px;top:191px" width="14" height="14" viewBox="0 0 14 14"><path d="M3.2 7 L6 9.8 L11 4" fill="none" stroke="#fff" stroke-width="1.4"/></svg>
<div class="a" style="left:1398px;top:191px;font-size:14px;line-height:14px;color:#5a9be6">显示异常状态</div>
<div class="a" style="left:1491px;top:184px;width:56px;height:28px;background:#2f89f5;border-radius:3px"></div>
<div class="a" style="left:1508px;top:192px;font-size:12px;line-height:12px;color:#fff">搜索</div>
<div class="a" style="left:1557px;top:184px;width:56px;height:28px;background:#2f89f5;border-radius:3px"></div>
<div class="a" style="left:1573px;top:192px;font-size:12px;line-height:12px;color:#fff">导出</div>
<svg class="a" style="left:1876px;top:189px" width="16" height="16" viewBox="0 0 16 16"><rect width="16" height="16" fill="#b9babf"/><g stroke="#f6f7f9" stroke-width="1"><path d="M0 5.5 H16 M0 10.5 H16 M5.5 5 V16 M10.5 5 V16"/></g></svg>
<div class="a" style="left:695px;top:267px;width:1212px;height:700px;background:#f9fafc"></div>
<div class="a" style="left:695px;top:232px;width:1212px;height:35px;background:#e2e9f2"></div>
<div class="a" style="left:1178px;top:240px;width:1px;height:20px;background:#d5dce6"></div>
<div class="a" style="left:1425px;top:240px;width:1px;height:20px;background:#d5dce6"></div>
<div class="a" style="left:1669px;top:240px;width:1px;height:20px;background:#d5dce6"></div>
<div class="a" style="left:1898px;top:240px;width:1px;height:20px;background:#d5dce6"></div>
<div class="th" style="left:790px">序号</div>
<div class="a" style="left:1016px;top:246px"><svg width="12" height="12" viewBox="0 0 12 12"><g fill="none" stroke="#222" stroke-width="1.3" stroke-linecap="round"><path d="M6.5 1 H2.3 Q1 1 1 2.3 V8.7 Q1 10 2.3 10 H8.2 Q9.5 10 9.5 8.7 V5.5"/><path d="M5 6.5 L11 0.7"/></g></svg></div>
<div class="th" style="left:1031px">时间</div>
<div class="a" style="left:1060px;top:246.5px"><svg width="10" height="11" viewBox="0 0 10 11"><path d="M0 4.6 L5 0.3 L10 4.6 Z M0 6.4 L5 10.7 L10 6.4 Z" fill="#c0c4cc"/></svg></div>
<div class="a" style="left:1248px;top:246px"><svg width="12" height="12" viewBox="0 0 12 12"><g fill="none" stroke="#222" stroke-width="1.3" stroke-linecap="round"><path d="M6.5 1 H2.3 Q1 1 1 2.3 V8.7 Q1 10 2.3 10 H8.2 Q9.5 10 9.5 8.7 V5.5"/><path d="M5 6.5 L11 0.7"/></g></svg></div>
<div class="th" style="left:1262px">净累计流量/吨</div>
<div class="a" style="left:1345px;top:246.5px"><svg width="10" height="11" viewBox="0 0 10 11"><path d="M0 4.6 L5 0.3 L10 4.6 Z M0 6.4 L5 10.7 L10 6.4 Z" fill="#c0c4cc"/></svg></div>
<div class="th" style="left:1511px">用水量/吨</div>
<div class="a" style="left:1569px;top:246.5px"><svg width="10" height="11" viewBox="0 0 10 11"><path d="M0 4.6 L5 0.3 L10 4.6 Z M0 6.4 L5 10.7 L10 6.4 Z" fill="#c0c4cc"/></svg></div>
<div class="th" style="left:1759px">抄表状态</div>
<div class="td" style="left:694px;width:214px;top:268px">34</div><div class="td" style="left:909px;width:269px;top:268px">2024-10-01 16:00:00</div><div class="td" style="left:1178px;width:247px;top:268px">161.647</div><div class="td" style="left:1423px;width:244px;top:268px">0.005</div><div class="td zc" style="left:1669px;width:228px;top:268px">正常</div><div class="rl" style="top:291px"></div><div class="td" style="left:694px;width:214px;top:304px">35</div><div class="td" style="left:909px;width:269px;top:304px">2024-10-01 16:30:00</div><div class="td" style="left:1178px;width:247px;top:304px">161.652</div><div class="td" style="left:1423px;width:244px;top:304px">0</div><div class="td zc" style="left:1669px;width:228px;top:304px">正常</div><div class="rl" style="top:327px"></div><div class="td" style="left:694px;width:214px;top:340px">36</div><div class="td" style="left:909px;width:269px;top:340px">2024-10-01 17:00:00</div><div class="td" style="left:1178px;width:247px;top:340px">161.652</div><div class="td" style="left:1423px;width:244px;top:340px">0</div><div class="td zc" style="left:1669px;width:228px;top:340px">正常</div><div class="rl" style="top:363px"></div><div class="td" style="left:694px;width:214px;top:376px">37</div><div class="td" style="left:909px;width:269px;top:376px">2024-10-01 17:30:00</div><div class="td" style="left:1178px;width:247px;top:376px">161.652</div><div class="td" style="left:1423px;width:244px;top:376px">0.001</div><div class="td zc" style="left:1669px;width:228px;top:376px">正常</div><div class="rl" style="top:399px"></div><div class="td" style="left:694px;width:214px;top:412px">38</div><div class="td" style="left:909px;width:269px;top:412px">2024-10-01 18:00:00</div><div class="td" style="left:1178px;width:247px;top:412px">161.653</div><div class="td" style="left:1423px;width:244px;top:412px">0.008</div><div class="td zc" style="left:1669px;width:228px;top:412px">正常</div><div class="rl" style="top:435px"></div><div class="td" style="left:694px;width:214px;top:448px">39</div><div class="td" style="left:909px;width:269px;top:448px">2024-10-01 18:30:00</div><div class="td" style="left:1178px;width:247px;top:448px">161.661</div><div class="td" style="left:1423px;width:244px;top:448px">0.015</div><div class="td zc" style="left:1669px;width:228px;top:448px">正常</div><div class="rl" style="top:471px"></div><div class="td" style="left:694px;width:214px;top:484px">40</div><div class="td" style="left:909px;width:269px;top:484px">2024-10-01 19:00:00</div><div class="td" style="left:1178px;width:247px;top:484px">161.676</div><div class="td" style="left:1423px;width:244px;top:484px">0.028</div><div class="td zc" style="left:1669px;width:228px;top:484px">正常</div><div class="rl" style="top:507px"></div><div class="td" style="left:694px;width:214px;top:520px">41</div><div class="td" style="left:909px;width:269px;top:520px">2024-10-01 19:30:00</div><div class="td" style="left:1178px;width:247px;top:520px">161.704</div><div class="td" style="left:1423px;width:244px;top:520px">0.012</div><div class="td zc" style="left:1669px;width:228px;top:520px">正常</div><div class="rl" style="top:543px"></div><div class="td" style="left:694px;width:214px;top:556px">42</div><div class="td" style="left:909px;width:269px;top:556px">2024-10-01 20:00:00</div><div class="td" style="left:1178px;width:247px;top:556px">161.716</div><div class="td" style="left:1423px;width:244px;top:556px">0.002</div><div class="td zc" style="left:1669px;width:228px;top:556px">正常</div><div class="rl" style="top:579px"></div><div class="td" style="left:694px;width:214px;top:592px">43</div><div class="td" style="left:909px;width:269px;top:592px">2024-10-01 20:30:00</div><div class="td" style="left:1178px;width:247px;top:592px">161.718</div><div class="td" style="left:1423px;width:244px;top:592px">0.016</div><div class="td zc" style="left:1669px;width:228px;top:592px">正常</div><div class="rl" style="top:615px"></div><div class="td" style="left:694px;width:214px;top:628px">44</div><div class="td" style="left:909px;width:269px;top:628px">2024-10-01 21:00:00</div><div class="td" style="left:1178px;width:247px;top:628px">161.734</div><div class="td" style="left:1423px;width:244px;top:628px">0</div><div class="td zc" style="left:1669px;width:228px;top:628px">正常</div><div class="rl" style="top:651px"></div><div class="td" style="left:694px;width:214px;top:664px">45</div><div class="td" style="left:909px;width:269px;top:664px">2024-10-01 21:30:00</div><div class="td" style="left:1178px;width:247px;top:664px">161.734</div><div class="td" style="left:1423px;width:244px;top:664px">0.057</div><div class="td zc" style="left:1669px;width:228px;top:664px">正常</div><div class="rl" style="top:687px"></div><div class="td" style="left:694px;width:214px;top:700px">46</div><div class="td" style="left:909px;width:269px;top:700px">2024-10-01 22:00:00</div><div class="td" style="left:1178px;width:247px;top:700px">161.791</div><div class="td" style="left:1423px;width:244px;top:700px">0.084</div><div class="td zc" style="left:1669px;width:228px;top:700px">正常</div><div class="rl" style="top:723px"></div><div class="td" style="left:694px;width:214px;top:736px">47</div><div class="td" style="left:909px;width:269px;top:736px">2024-10-01 22:30:00</div><div class="td" style="left:1178px;width:247px;top:736px">161.875</div><div class="td" style="left:1423px;width:244px;top:736px">0.011</div><div class="td zc" style="left:1669px;width:228px;top:736px">正常</div><div class="rl" style="top:759px"></div><div class="td" style="left:694px;width:214px;top:772px">48</div><div class="td" style="left:909px;width:269px;top:772px">2024-10-01 23:00:00</div><div class="td" style="left:1178px;width:247px;top:772px">161.886</div><div class="td" style="left:1423px;width:244px;top:772px">0.004</div><div class="td zc" style="left:1669px;width:228px;top:772px">正常</div><div class="rl" style="top:795px"></div><div class="td" style="left:694px;width:214px;top:808px">49</div><div class="td" style="left:909px;width:269px;top:808px">2024-10-01 23:30:00</div><div class="td" style="left:1178px;width:247px;top:808px">161.89</div><div class="td" style="left:1423px;width:244px;top:808px">0</div><div class="td zc" style="left:1669px;width:228px;top:808px">正常</div><div class="rl" style="top:831px"></div><div class="td" style="left:694px;width:214px;top:844px">50</div><div class="td" style="left:909px;width:269px;top:844px">2024-10-02 00:00:00</div><div class="td" style="left:1178px;width:247px;top:844px">161.89</div><div class="td" style="left:1423px;width:244px;top:844px">0.005</div><div class="td zc" style="left:1669px;width:228px;top:844px">正常</div><div class="rl" style="top:867px"></div><div class="td" style="left:694px;width:214px;top:880px">51</div><div class="td" style="left:909px;width:269px;top:880px">2024-10-02 00:30:00</div><div class="td" style="left:1178px;width:247px;top:880px">161.895</div><div class="td" style="left:1423px;width:244px;top:880px">0.01</div><div class="td zc" style="left:1669px;width:228px;top:880px">正常</div><div class="rl" style="top:903px"></div><div class="td" style="left:694px;width:214px;top:916px">52</div><div class="td" style="left:909px;width:269px;top:916px">2024-10-02 01:00:00</div><div class="td" style="left:1178px;width:247px;top:916px">161.905</div><div class="td" style="left:1423px;width:244px;top:916px">0</div><div class="td zc" style="left:1669px;width:228px;top:916px">正常</div><div class="rl" style="top:939px"></div><div class="td" style="left:694px;width:214px;top:952px">53</div><div class="td" style="left:909px;width:269px;top:952px">2024-10-02 01:30:00</div><div class="td" style="left:1178px;width:247px;top:952px">161.905</div><div class="td" style="left:1423px;width:244px;top:952px">0</div><div class="td zc" style="left:1669px;width:228px;top:952px">正常</div>
<div class="a" style="left:1897px;top:276px;width:10px;height:40px;background:#8c97ad;border-radius:5px"></div>
<div class="a" style="left:0;top:967px;width:1912px;height:8px;background:#1c5e6e;border-top:1px solid #0d2a33"></div>
<div class="a" style="left:0;top:968px;width:1912px;height:1px;background:#7fa9b3"></div>
<div class="a" style="left:5px;top:969px;width:27px;height:6px;border-radius:14px 14px 0 0;background:#b9c8d8"></div>
<div class="a" style="left:46px;top:969px;width:157px;height:6px;background:#e8ecee"></div>
<div class="a" style="left:203px;top:969px;width:60px;height:6px;background:#1f7ad8"></div>
<div class="a" style="left:265px;top:969px;width:58px;height:6px;background:#8fb3bd;border-radius:2px 2px 0 0"></div>
<div class="a" style="left:327px;top:969px;width:53px;height:6px;background:#8fb3bd;border-radius:2px 2px 0 0"></div>
<div class="a" style="left:388px;top:969px;width:52px;height:6px;background:#8fb3bd;border-radius:2px 2px 0 0"></div>
<div class="a" style="left:450px;top:969px;width:59px;height:6px;background:#8fb3bd;border-radius:2px 2px 0 0"></div>
<div class="a" style="left:1895px;top:969px;width:17px;height:6px;background:#9fb5bb"></div>
</body></html>
